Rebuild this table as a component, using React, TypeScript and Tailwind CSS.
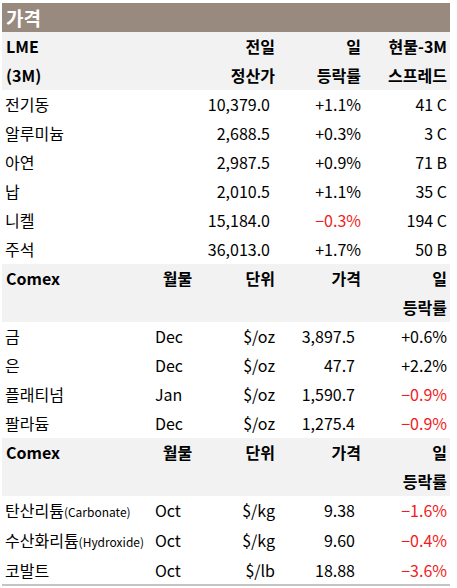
const RED = 'text-[#f01c24]';

type LmeRow = { name: string; price: string; chg: string; spread: string; down?: boolean };
type ComexRow = { name: string; sub?: string; month: string; unit: string; price: string; chg: string; down?: boolean };

const lme: LmeRow[] = [
	{ name: '전기동', price: '10,379.0', chg: '+1.1%', spread: '41 C' },
	{ name: '알루미늄', price: '2,688.5', chg: '+0.3%', spread: '3 C' },
	{ name: '아연', price: '2,987.5', chg: '+0.9%', spread: '71 B' },
	{ name: '납', price: '2,010.5', chg: '+1.1%', spread: '35 C' },
	{ name: '니켈', price: '15,184.0', chg: '-0.3%', spread: '194 C', down: true },
	{ name: '주석', price: '36,013.0', chg: '+1.7%', spread: '50 B' },
];

const comex1: ComexRow[] = [
	{ name: '금', month: 'Dec', unit: '$/oz', price: '3,897.5', chg: '+0.6%' },
	{ name: '은', month: 'Dec', unit: '$/oz', price: '47.7', chg: '+2.2%' },
	{ name: '플래티넘', month: 'Jan', unit: '$/oz', price: '1,590.7', chg: '-0.9%', down: true },
	{ name: '팔라듐', month: 'Dec', unit: '$/oz', price: '1,275.4', chg: '-0.9%', down: true },
];

const comex2: ComexRow[] = [
	{ name: '탄산리튬', sub: '(Carbonate)', month: 'Oct', unit: '$/kg', price: '9.38', chg: '-1.6%', down: true },
	{ name: '수산화리튬', sub: '(Hydroxide)', month: 'Oct', unit: '$/kg', price: '9.60', chg: '-0.4%', down: true },
	{ name: '코발트', month: 'Oct', unit: '$/lb', price: '18.88', chg: '-3.6%', down: true },
];

const lmeGrid = 'grid grid-cols-[190px_86px_86px_86px]';
const comexGrid = 'grid grid-cols-[150px_51px_75px_86px_86px]';

const ComexHeader = () => (
	<div className={`${comexGrid} bg-[#f2f2f2] font-bold leading-[29px]`}>
		<div className="pl-[4px]">Comex</div>
		<div className="text-center">월물</div>
		<div className="text-right pr-[3px]">단위</div>
		<div className="text-right pr-[3px]">가격</div>
		<div className="text-right pr-[3px]">
			<div>일</div>
			<div>등락률</div>
		</div>
	</div>
);

const ComexRows = ({ rows }: { rows: ComexRow[] }) => (
	<>
		{rows.map((r) => (
			<div key={r.name} className={`${comexGrid} leading-[29px]`}>
				<div className="pl-[3px] whitespace-nowrap">
					{r.name}
					{r.sub && <span className="text-[12px]">{r.sub}</span>}
				</div>
				<div className="pl-[3px]">{r.month}</div>
				<div className="text-right pr-[3px]">{r.unit}</div>
				<div className="text-right pr-[9px]">{r.price}</div>
				<div className={`text-right pr-[3px] ${r.down ? RED : ''}`}>{r.chg.replace('-', '−')}</div>
			</div>
		))}
	</>
);

export default function App() {
	return (
		<div className="pt-[3px] pl-[2px] bg-white text-black text-[16px] font-['Noto_Sans_CJK_KR',sans-serif]">
			<div className="w-[448px]">
				<div className="bg-[#988a7f] text-white font-bold text-[19px] leading-[29px] pl-[4px]">가격</div>

				<div className={`${lmeGrid} bg-[#f2f2f2] font-bold leading-[29px]`}>
					<div className="pl-[4px]">
						<div>LME</div>
						<div>(3M)</div>
					</div>
					<div className="text-right pr-[3px]">
						<div>전일</div>
						<div>정산가</div>
					</div>
					<div className="text-right pr-[3px]">
						<div>일</div>
						<div>등락률</div>
					</div>
					<div className="text-right pr-[3px] whitespace-nowrap">
						<div>현물-3M</div>
						<div>스프레드</div>
					</div>
				</div>

				{lme.map((r) => (
					<div key={r.name} className={`${lmeGrid} leading-[29px]`}>
						<div className="pl-[3px]">{r.name}</div>
						<div className="text-right pr-[8px]">{r.price}</div>
						<div className={`text-right pr-[3px] ${r.down ? RED : ''}`}>{r.chg.replace('-', '−')}</div>
						<div className="text-right pr-[3px]">{r.spread}</div>
					</div>
				))}

				<ComexHeader />
				<ComexRows rows={comex1} />
				<ComexHeader />
				<ComexRows rows={comex2} />

				<div className="h-[2px] bg-[#c4c4c4] -mt-[1px]" />
			</div>
		</div>
	);
}
